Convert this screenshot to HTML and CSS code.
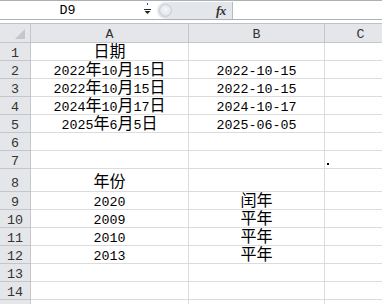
FILE: index.html
```html
<!DOCTYPE html>
<html>
<head>
<meta charset="utf-8">
<link rel="stylesheet" href="styles.css">
</head>
<body>
<div class="app">
  <div class="fbar">
    <div class="namebox">
      <span class="ref">D9</span>
      <svg class="dd" width="9" height="14" viewBox="0 0 9 14">
        <rect x="3" y="2" width="1" height="2" fill="#2a4bd7"/>
        <rect x="0" y="8" width="7" height="1" fill="#222"/>
        <path d="M0.5 10 H6.5 L3.5 13 Z" fill="#222"/>
      </svg>
    </div>
    <div class="fxzone">
      <span class="grip"></span>
      <span class="fx">fx</span>
    </div>
    <div class="finput"></div>
  </div>
  <div class="gap"></div>
  <div class="sheet">
    <div class="corner"><svg width="11" height="11" viewBox="0 0 11 11"><path d="M10 0 V10 H0 Z" fill="#c3c6ca"/></svg></div>
    <div class="ch">A</div><div class="ch">B</div><div class="ch">C</div>

    <div class="rh">1</div><div class="c"><span class="cj">日期</span></div><div class="c"></div><div class="c"></div>
    <div class="rh">2</div><div class="c">2022<span class="cj">年</span>10<span class="cj">月</span>15<span class="cj">日</span></div><div class="c">2022-10-15</div><div class="c"></div>
    <div class="rh">3</div><div class="c">2022<span class="cj">年</span>10<span class="cj">月</span>15<span class="cj">日</span></div><div class="c">2022-10-15</div><div class="c"></div>
    <div class="rh">4</div><div class="c">2024<span class="cj">年</span>10<span class="cj">月</span>17<span class="cj">日</span></div><div class="c">2024-10-17</div><div class="c"></div>
    <div class="rh">5</div><div class="c">2025<span class="cj">年</span>6<span class="cj">月</span>5<span class="cj">日</span></div><div class="c">2025-06-05</div><div class="c"></div>
    <div class="rh">6</div><div class="c"></div><div class="c"></div><div class="c"></div>
    <div class="rh">7</div><div class="c"></div><div class="c"></div><div class="c"></div>
    <div class="rh r8">8</div><div class="c r8"><span class="cj">年份</span></div><div class="c"></div><div class="c"></div>
    <div class="rh">9</div><div class="c">2020</div><div class="c"><span class="cj">闰年</span></div><div class="c"></div>
    <div class="rh">10</div><div class="c">2009</div><div class="c"><span class="cj">平年</span></div><div class="c"></div>
    <div class="rh">11</div><div class="c">2010</div><div class="c"><span class="cj">平年</span></div><div class="c"></div>
    <div class="rh">12</div><div class="c">2013</div><div class="c"><span class="cj">平年</span></div><div class="c"></div>
    <div class="rh">13</div><div class="c"></div><div class="c"></div><div class="c"></div>
    <div class="rh">14</div><div class="c"></div><div class="c"></div><div class="c"></div>
    <div class="rh"></div><div class="c"></div><div class="c"></div><div class="c"></div>
  </div>
  <span class="dot"></span>
</div>
</body>
</html>
```
FILE: styles.css
```css
html, body {
  margin: 0;
  padding: 0;
  background: #fff;
}
.app {
  position: relative;
  width: 382px;
  height: 304px;
  overflow: hidden;
  font-family: "Liberation Mono", "Noto Sans CJK SC", monospace;
  font-size: 13.33px;
  color: #000;
}
.fbar {
  display: flex;
  height: 20px;
  box-sizing: border-box;
  border-top: 1px solid #aab0b6;
  border-bottom: 1px solid #aab0b6;
}
.namebox {
  position: relative;
  width: 157px;
  flex: none;
  display: flex;
  align-items: flex-end;
  justify-content: center;
}
.ref {
  margin-right: 22px;
  line-height: 12px;
  margin-bottom: 2px;
}
.dd {
  position: absolute;
  left: 144px;
  top: 0;
}
.fxzone {
  position: relative;
  width: 76px;
  flex: none;
  box-sizing: border-box;
  background: #e3e6ea;
  border-right: 1px solid #b8bcc1;
  border-radius: 9px 0 0 9px;
  margin-top: 1px;
}
.grip {
  position: absolute;
  left: 2px;
  top: 2px;
  width: 13px;
  height: 13px;
  border-radius: 50%;
  background: radial-gradient(circle at 50% 40%, #f6f7f8 0%, #e6e8eb 60%, #cdd1d6 100%);
  border: 1px solid #c8ccd1;
  box-sizing: border-box;
}
.fx {
  position: absolute;
  left: 59px;
  top: 1px;
  font-family: "Liberation Serif", serif;
  font-style: italic;
  font-weight: bold;
  font-size: 13px;
  line-height: 15px;
  color: #333;
  letter-spacing: -0.5px;
}
.finput {
  flex: 1;
}
.gap {
  height: 3px;
}
.sheet {
  display: grid;
  width: 397px;
  grid-template-columns: 31px 158px 136px 72px;
  grid-template-rows: 19px repeat(7, 18px) 23px repeat(7, 18px);
  border-top: 1px solid #bfc3c8;
}
.corner, .ch, .rh {
  background: #e4e6e9;
  box-sizing: border-box;
  border-right: 1px solid #c3c7cc;
  border-bottom: 1px solid #c3c7cc;
  color: #333;
}
.corner {
  display: flex;
  align-items: flex-end;
  justify-content: flex-end;
  padding: 0 4px 2px 0;
}
.corner svg { display: block; }
.ch, .rh, .c {
  box-sizing: border-box;
  text-align: center;
  line-height: 12px;
  padding-top: 5px;
  white-space: nowrap;
}
.c {
  border-right: 1px solid #dadcdd;
  border-bottom: 1px solid #dadcdd;
}
.rh.r8, .c.r8 {
  padding-top: 9px;
}
.cj {
  font-family: "Noto Sans CJK SC", sans-serif;
  font-size: 16px;
  line-height: 0;
}
.dot {
  position: absolute;
  left: 327px;
  top: 163px;
  width: 2px;
  height: 2px;
  background: #000;
}
```
